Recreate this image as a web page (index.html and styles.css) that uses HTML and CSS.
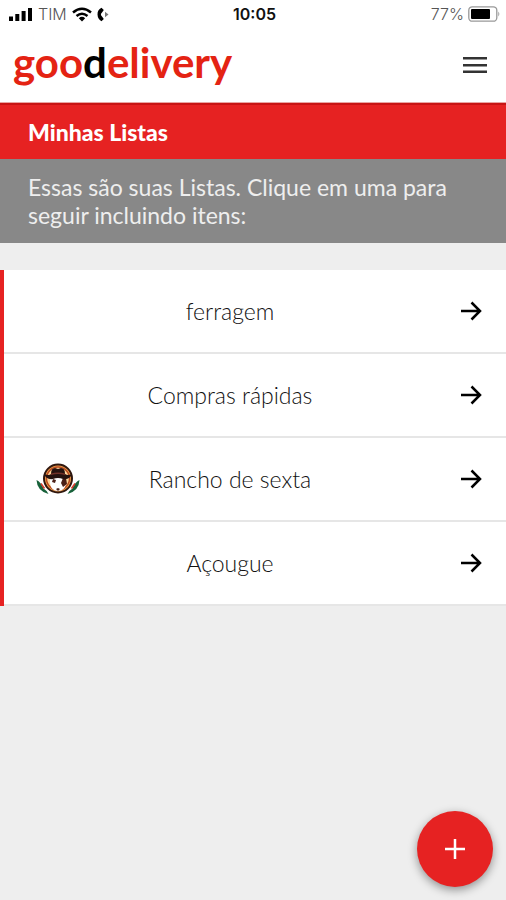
FILE: index.html
```html
<!DOCTYPE html>
<html lang="pt-BR">
<head>
<meta charset="utf-8">
<meta name="viewport" content="width=device-width, initial-scale=1">
<title>Minhas Listas</title>
<link rel="stylesheet" href="styles.css">
</head>
<body>
<div class="status">
  <div class="status-side">
    <svg width="24" height="14" viewBox="0 0 24 14"><path d="M0 9.500h4V14H0zM6.300 7h4v7h-4zM12.600 4h4v10h-4zM19 1h4v13h-4z"/></svg>
    <span>TIM</span>
    <svg width="20" height="15" viewBox="0 0 20 15" fill="none" stroke="#000" stroke-width="2.500"><path d="M1 5.500Q10-2 19 5.500M4.500 9Q10 4.500 15.500 9"/><path d="M6.800 11.200Q10 8.500 13.200 11.200L10 14.500z" fill="#000" stroke="none"/></svg>
    <svg width="13" height="15" viewBox="0 0 13 15"><path d="M4.500.8Q.3 3 .5 7.500T4.500 14.200L6.800 12 5 9.500Q2.800 7.500 5 5.500L6.800 3z"/><path d="M8 4.800l3.500 2.700L8 10.200z" fill="#777"/></svg>
  </div>
  <time class="clock">10:05</time>
  <div class="status-side status-end">
    <span>77%</span>
    <svg width="32" height="16" viewBox="0 0 32 16"><rect x=".8" y=".8" width="28" height="14.400" rx="3.500" fill="#fff" stroke="#999" stroke-width="1.300"/><rect x="3" y="3" width="19" height="10" rx="1"/><path d="M30.300 5.500q2 2.500 0 5z" fill="#999"/></svg>
  </div>
</div>
<header class="header">
  <a class="brand" href="#">goo<span>d</span>elivery</a>
  <button class="menu" type="button" aria-label="Menu"><svg width="26" height="18" viewBox="0 0 26 18"><path d="M1 1h24v2.500H1zM1 8h24v2.500H1zM1 14.500h24V17H1z" fill="#333"/></svg></button>
</header>
<main>
  <h1 class="title">Minhas Listas</h1>
  <p class="intro">Essas são suas Listas. Clique em uma para seguir incluindo itens:</p>
  <ul class="lists">
    <li><a class="row" href="#"><span class="thumb"></span><span class="label">ferragem</span><svg class="arrow" width="22" height="20" viewBox="0 0 22 20"><path d="M1 10h19M11.500 1.500L20 10l-8.500 8.500"/></svg></a></li>
    <li><a class="row" href="#"><span class="thumb"></span><span class="label">Compras rápidas</span><svg class="arrow" width="22" height="20" viewBox="0 0 22 20"><path d="M1 10h19M11.500 1.500L20 10l-8.500 8.500"/></svg></a></li>
    <li><a class="row" href="#"><span class="thumb">
      <svg width="44" height="32" viewBox="0 0 44 32">
        <path d="M.5 17q.5 11 12 14-1-3-5-5.500Q5 19 .5 17z" fill="#17613a"/><path d="M43.500 17q-.5 11-12 14 1-3 5-5.500 2.500-6.500 7-8.500z" fill="#17613a"/>
        <path d="M5 20.500l3.500 5M39 20.500l-3.500 5" stroke="#d83b2b" stroke-width="1.500"/>
        <circle cx="22" cy="15.500" r="14" fill="#f3a34b" stroke="#30170f" stroke-width="2"/>
        <circle cx="22" cy="15.500" r="11.500" fill="#ffd79b" stroke="#b84b22" stroke-width="1.500"/>
        <path d="M14 14h16v6q-1 8-8 8t-8-8z" fill="#fff"/>
        <path d="M27 15l3 0 1 6-4 3-2-4zM17 16l3 1-1 3-3-1zM20 26l2-1 2 1-2 2z" fill="#4a2018"/>
        <path d="M8 11q5 2 7 0 0-6 4-6l3 1 3-1q4 0 4 6 3 2 7 0-2 6-9 5-5-2-10 0-7 1-9-5z" fill="#25120f"/>
        <path d="M15 10.500q7-2 14 0v1.500q-7-2-14 0z" fill="#713128"/>
      </svg></span><span class="label">Rancho de sexta</span><svg class="arrow" width="22" height="20" viewBox="0 0 22 20"><path d="M1 10h19M11.500 1.500L20 10l-8.500 8.500"/></svg></a></li>
    <li><a class="row" href="#"><span class="thumb"></span><span class="label">Açougue</span><svg class="arrow" width="22" height="20" viewBox="0 0 22 20"><path d="M1 10h19M11.500 1.500L20 10l-8.500 8.500"/></svg></a></li>
  </ul>
</main>
<button class="add" type="button" aria-label="Adicionar lista"><svg width="22" height="22" viewBox="0 0 22 22"><path d="M11 1v20M1 11h20" stroke="#fff" stroke-width="2.500"/></svg></button>
</body>
</html>
```
FILE: styles.css
```css
* { box-sizing: border-box; }
body {
  margin: 0;
  min-height: 100vh;
  background: #eee;
  color: #111;
  font-family: Lato, "Liberation Sans", sans-serif;
}
svg { display: block; flex: none; }
a { color: inherit; text-decoration: none; }
button { border: 0; padding: 0; cursor: pointer; }
.status {
  display: grid;
  grid-template-columns: 1fr auto 1fr;
  align-items: center;
  height: 28px;
  padding: 0 6px 0 9px;
  background: #fff;
  font: 16px/20px Inter, sans-serif;
}
.status-side { display: flex; align-items: center; gap: 5px; color: #555; }
.status-side span { font-weight: 300; }
.status-end { justify-content: flex-end; gap: 4px; }
.clock { font-weight: 600; }
.header {
  display: flex;
  align-items: center;
  justify-content: space-between;
  height: 75px;
  padding: 0 18px 0 13px;
  background: #fff;
  border-bottom: 1px solid #e9a5a3;
}
.brand {
  padding-bottom: 6px;
  color: #e42313;
  font-size: 42px;
  font-weight: 700;
  line-height: 60px;
}
.brand span { color: #000; }
.menu { background: none; }
.title {
  margin: 0;
  padding: 14px 28px;
  border-top: 2px solid #c81414;
  background: #e62222;
  color: #fff;
  font-size: 23px;
  font-weight: 900;
  line-height: 26px;
}
.intro {
  margin: 0;
  padding: 14px 28px;
  background: #888;
  color: #eee;
  font-size: 23px;
  line-height: 28px;
}
.lists {
  margin: 27px 0 0;
  padding: 0;
  list-style: none;
  border-left: 4px solid #e62222;
  background: #fff;
}
.row {
  display: grid;
  grid-template-columns: 54px 1fr 112px;
  align-items: center;
  height: 84px;
  padding: 0 24px 0 32px;
  border-bottom: 2px solid #e6e6e6;
}
.label { text-align: center; font-size: 23px; line-height: 28px; font-weight: 300; }
.arrow { justify-self: end; fill: none; stroke: #000; stroke-width: 2.5; }
.add {
  position: fixed;
  right: 13px;
  bottom: 13px;
  display: grid;
  place-items: center;
  width: 76px;
  height: 76px;
  border-radius: 50%;
  background: #e62222;
  box-shadow: 0 3px 10px rgba(0, 0, 0, 0.4);
}
```
